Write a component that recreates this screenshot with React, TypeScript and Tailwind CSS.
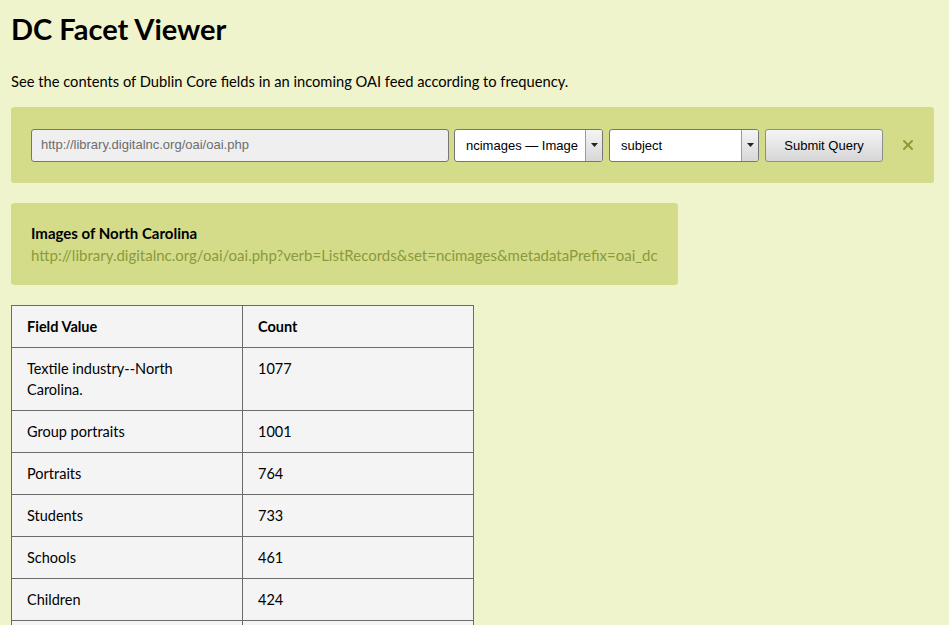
import { X } from 'lucide-react';

const rows = [
  { value: 'Textile industry--North Carolina.', count: 1077 },
  { value: 'Group portraits', count: 1001 },
  { value: 'Portraits', count: 764 },
  { value: 'Students', count: 733 },
  { value: 'Schools', count: 461 },
  { value: 'Children', count: 424 },
  { value: 'Buildings', count: 398 },
];

const SelectBox = ({ label, width }: { label: string; width: string }) => {
  return (
    <div
      className={`flex h-[33px] ${width} items-stretch overflow-hidden rounded-[3px] border border-[#767676] bg-white`}
    >
      <span className="flex-1 overflow-hidden whitespace-nowrap pl-[11px] pt-[6px] text-[13px] text-black">
        {label}
      </span>
      <span className="flex w-[17px] items-center justify-center border-l border-[#9a9a9a] bg-gradient-to-b from-[#f4f4f4] to-[#d8d8d8]">
        <svg width="7" height="4" viewBox="0 0 7 4">
          <path d="M0 0h7L3.5 4z" fill="#222" />
        </svg>
      </span>
    </div>
  );
};

export default function App() {
  return (
    <div
      className="min-h-screen w-full bg-[#f0f4cc] px-[11px] pt-[10px] text-black"
      style={{ fontFamily: 'Lato, "Open Sans", sans-serif' }}
    >
      <h1 className="text-[29px] font-bold leading-[38px]">DC Facet Viewer</h1>
      <p className="mt-[24px] text-[14.7px] leading-[18px]">
        See the contents of Dublin Core fields in an incoming OAI feed according to frequency.
      </p>

      {/* Query form */}
      <div
        className="mt-[17px] flex h-[76px] w-[923px] items-center gap-[5px] rounded-[3px] bg-[#d4dc8a] pl-[20px]"
        style={{ fontFamily: 'Arial, "Liberation Sans", sans-serif' }}
      >
        <div className="flex h-[33px] w-[418px] items-center rounded-[3px] border border-[#767676] bg-[#efefef] pl-[9px] text-[13px] text-[#6d6d6d]">
          http://library.digitalnc.org/oai/oai.php
        </div>
        <SelectBox label="ncimages — Image" width="w-[149px]" />
        <div className="ml-[1px]">
          <SelectBox label="subject" width="w-[150px]" />
        </div>
        <button className="ml-[1px] h-[33px] w-[118px] rounded-[3px] border border-[#8e8e8e] bg-gradient-to-b from-[#f5f5f5] to-[#d6d6d6] pt-[2px] text-[13px] text-black">
          Submit Query
        </button>
        <X className="ml-[12px] h-[16px] w-[16px] text-[#8e9a32]" strokeWidth={3} />
      </div>

      {/* Feed info */}
      <div className="mt-[20px] w-[667px] rounded-[3px] bg-[#d4dc8a] px-[20px] pb-[19px] pt-[20px]">
        <div className="text-[15px] font-bold leading-[21px]">Images of North Carolina</div>
        <div className="text-[15px] leading-[22px] text-[#8b9a3a]">
          http://library.digitalnc.org/oai/oai.php?verb=ListRecords&amp;set=ncimages&amp;metadataPrefix=oai_dc
        </div>
      </div>

      {/* Facet table */}
      <table className="mt-[20px] w-[463px] table-fixed border-collapse bg-[#f4f4f4] text-[14.5px] leading-[21px]">
        <thead>
          <tr>
            <th className="h-[42px] w-[231px] border border-[#6b6b6b] px-[15px] py-[10px] text-left align-top font-bold">
              Field Value
            </th>
            <th className="h-[42px] border border-[#6b6b6b] px-[15px] py-[10px] text-left align-top font-bold">
              Count
            </th>
          </tr>
        </thead>
        <tbody>
          {rows.map((row) => (
            <tr key={row.value}>
              <td className="h-[42px] border border-[#6b6b6b] px-[15px] py-[10px] pr-[60px] align-top">
                {row.value}
              </td>
              <td className="h-[42px] border border-[#6b6b6b] px-[15px] py-[10px] align-top">{row.count}</td>
            </tr>
          ))}
        </tbody>
      </table>
    </div>
  );
}
